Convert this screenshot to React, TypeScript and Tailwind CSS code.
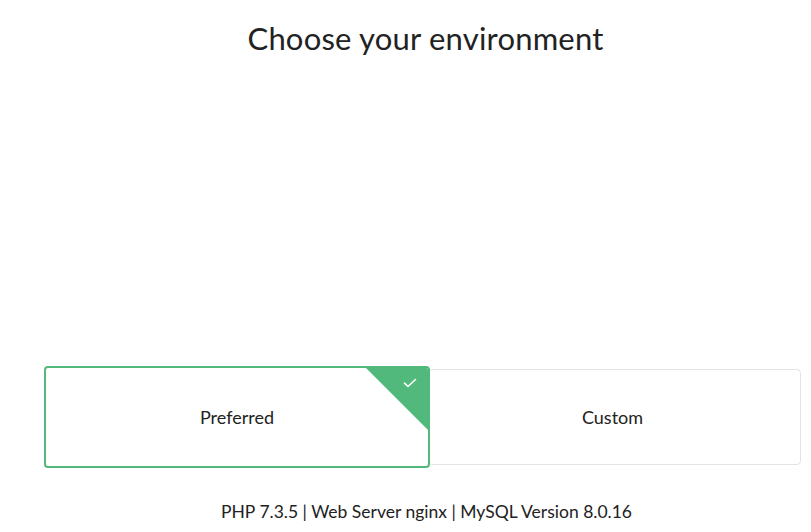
import React, { useState } from 'react';

const App = () => {
  const [selected, setSelected] = useState<'preferred' | 'custom'>('preferred');

  return (
    <div className="w-[811px] h-[532px] bg-white flex flex-col text-[#222] font-['Lato',sans-serif]">
      <h1 className="pt-[19px] pl-[40px] text-center text-[31px] leading-[38px] tracking-[0.2px]">
        Choose your environment
      </h1>

      <div className="flex-1" />

      <div className="flex items-center pl-[44px] pr-[10px]">
        <button
          onClick={() => setSelected('preferred')}
          className="relative z-10 w-[386px] h-[102px] rounded-[4px] border-2 border-[#52b97c] bg-white overflow-hidden flex items-center justify-center text-[18px]"
        >
          <span className="absolute top-0 right-0 w-0 h-0 border-t-[62px] border-l-[62px] border-t-[#52b97c] border-l-transparent" />
          <svg
            className="absolute top-[10px] right-[11px]"
            width="14"
            height="10"
            viewBox="0 0 14 10"
            fill="none"
            stroke="white"
            strokeWidth="1.6"
            strokeLinecap="round"
            strokeLinejoin="round"
          >
            <path d="M1.5 5.2 L5 8.5 L12.5 1.5" />
          </svg>
          Preferred
        </button>
        <button
          onClick={() => setSelected('custom')}
          className="flex-1 h-[96px] -ml-[2px] pr-[4px] rounded-[4px] border border-[#e3e3e3] bg-white flex items-center justify-center text-[18px]"
        >
          Custom
        </button>
      </div>

      <p className="pt-[33px] pb-[9px] pl-[42px] text-center text-[17.5px] leading-[22px]">
        PHP 7.3.5 | Web Server nginx | MySQL Version 8.0.16
      </p>
    </div>
  );
};

export default App;
